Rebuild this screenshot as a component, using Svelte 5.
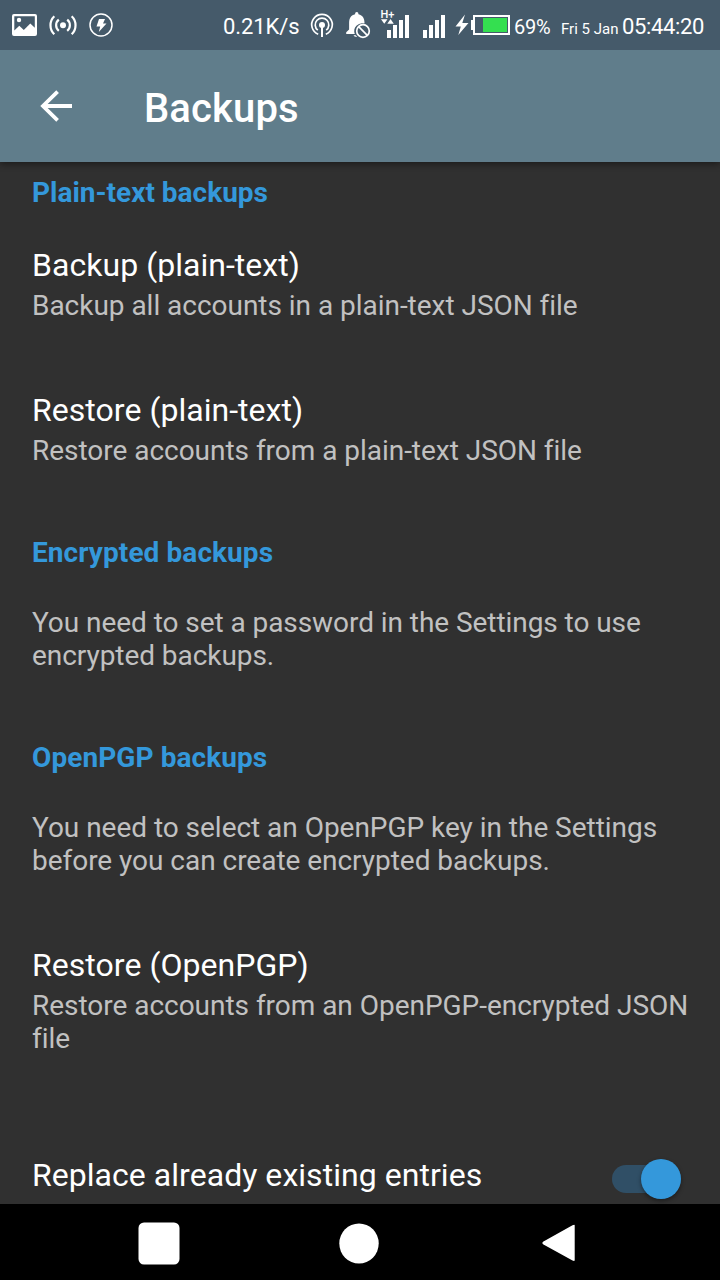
<script>
  const sections = [
    { heading: 'Plain-text backups', cls: 'plain', items: [
      { title: 'Backup (plain-text)', summary: ['Backup all accounts in a plain-text JSON file'] },
      { title: 'Restore (plain-text)', summary: ['Restore accounts from a plain-text JSON file'] }
    ] },
    { heading: 'Encrypted backups', cls: 'encrypted', items: [
      { summary: ['You need to set a password in the Settings to use', 'encrypted backups.'] }
    ] },
    { heading: 'OpenPGP backups', cls: 'pgp', items: [
      { summary: ['You need to select an OpenPGP key in the Settings', 'before you can create encrypted backups.'] },
      { title: 'Restore (OpenPGP)', summary: ['Restore accounts from an OpenPGP-encrypted JSON', 'file'] }
    ] }
  ];
  let replace = $state(true);
</script>

<div class="screen">
  <header class="status">
    <svg class="left-icons" width="122" height="50" viewBox="0 0 122 50" fill="#fff">
      <path fill-rule="evenodd" d="M14 14h21q2 0 2 2v18q0 2-2 2H14q-2 0-2-2V16q0-2 2-2zM14.300 16.300v14.200l5-4.800 4.500 4.300 6.500-6.600 4.500 4.300V16.300z" />
      <circle cx="19" cy="20" r="2.200" />
      <circle cx="63" cy="25.300" r="3" />
      <g fill="none" stroke="#fff" stroke-width="2.200">
        <path d="M58.800 19.700a7.200 7.200 0 0 0 0 11.200M67.200 19.700a7.200 7.200 0 0 1 0 11.200M54.300 16.300a12.500 12.500 0 0 0 0 18M71.700 16.300a12.500 12.500 0 0 1 0 18" />
        <circle cx="101" cy="25" r="11" stroke-width="1.500" />
      </g>
      <path d="M99 19h6l-2 4.500h3.500L98.800 32l1.400-5.500h-3.700z" />
    </svg>
    <span class="speed">0.21K/s</span>
    <svg class="mid-icons" width="215" height="50" viewBox="299 0 215 50" fill="#fff">
      <g fill="none" stroke="#fff" stroke-width="1.700">
        <path d="M318.200 34.200a10.300 10.300 0 1 1 7.600 0" />
        <path d="M317.800 30.200a6.800 6.800 0 1 1 8.400 0" />
        <path d="M322 26v11" stroke-width="2" />
      </g>
      <circle cx="322" cy="25" r="3" />
      <path d="M356.800 12q1.700 0 1.700 2.300c4.300 1 6 4.100 6 8.500v.7a8 8 0 0 0-9.700 10.500H346.200v-1.700l2.900-2.700v-7c0-4.400 2-7.500 6-8.300 0-1.600.5-2.300 1.700-2.300zM353.600 35.300h2.200l1.300 1.700c-2 0-3.200-.5-3.500-1.700z" />
      <circle cx="363" cy="31" r="6.300" fill="none" stroke="#fff" stroke-width="1.700" />
      <path d="m358.700 26.700 8.600 8.600" stroke="#fff" stroke-width="1.700" />
      <path d="M381 19.300h6.500l-3.250 4.500zM387.300 23.800h6.500l-3.250-4.700z" />
      <path d="M387 30h4v8h-4zM393 25h4v13h-4zM399 20h4v18h-4zM405 15h4v23h-4zM423 30h4v8h-4zM429 25h4v13h-4zM435 20h4v18h-4zM441 15h4v23h-4z" />
      <path d="m465 14.500-9.500 12h5.300l-2.500 8.500 10.200-12h-6.200z" />
      <path d="M471 20h3v10h-3z" />
      <rect x="474" y="16" width="35" height="18" fill="none" stroke="#fff" stroke-width="2" />
      <path d="M483 18h24v14h-24z" fill="#34df50" />
      <text x="380.500" y="17.900" font-family="Roboto, sans-serif" font-size="11" font-weight="500">H+</text>
    </svg>
    <span class="percent">69%</span>
    <span class="date">Fri 5 Jan</span>
    <span class="clock">05:44:20</span>
  </header>

  <div class="appbar">
    <svg width="34" height="34" viewBox="0 0 34 34" fill="none" stroke="#fff" stroke-width="3.800">
      <path d="M33 17H4M18.600 2.700 4 17l14.600 14.300" />
    </svg>
    <h1>Backups</h1>
  </div>

  <main>
    {#each sections as section}
      <section class={section.cls}>
        <h2>{section.heading}</h2>
        {#each section.items as item}
          <div class="item">
            {#if item.title}<h3>{item.title}</h3>{/if}
            <p>{#each item.summary as line}<span>{line}</span>{/each}</p>
          </div>
        {/each}
      </section>
    {/each}
    <div class="toggle-row">
      <h3>Replace already existing entries</h3>
      <button class="switch" class:on={replace} onclick={() => (replace = !replace)} aria-label="Replace already existing entries">
        <i></i>
      </button>
    </div>
  </main>

  <nav>
    <svg width="720" height="76" viewBox="0 1204 720 76" fill="#fff">
      <rect x="138.500" y="1222.500" width="41" height="42" rx="5.500" />
      <ellipse cx="359" cy="1243.500" rx="19.700" ry="20" />
      <path d="M543 1241.800 572.500 1225.200q2.200-1 2.200 0v35q0 1.200-2.200.4L543 1244.200q-1.500-1.200 0-2.400z" />
    </svg>
  </nav>
</div>

<style>
  :global(body) { margin: 0; background: #303030; }
  .screen {
    width: 720px;
    height: 1280px;
    display: flex;
    flex-direction: column;
    overflow: hidden;
    background: #303030;
    color: #fff;
    font-family: Roboto, sans-serif;
  }
  svg { display: block; flex: none; }
  h1, h2, h3, p { margin: 0; white-space: nowrap; }
  .status {
    height: 50px;
    flex: none;
    display: flex;
    align-items: baseline;
    background: #455a6a;
    white-space: nowrap;
    line-height: 52px;
    z-index: 2;
  }
  .status svg { align-self: flex-start; }
  .speed { width: 76px; margin-left: 101px; font-size: 22px; letter-spacing: -0.1px; }
  .percent { width: 47px; font-size: 20px; letter-spacing: -0.2px; }
  .date { width: 61px; font-size: 15px; }
  .clock { font-size: 22px; letter-spacing: -0.35px; }
  .status span { position: relative; top: 1px; }
  .appbar {
    height: 112px;
    flex: none;
    display: flex;
    align-items: center;
    box-sizing: border-box;
    padding-left: 39px;
    background: #607d8b;
    box-shadow: 0 2px 7px rgba(0, 0, 0, 0.45);
    z-index: 1;
  }
  h1 { margin: 6px 0 0 71px; font-size: 40px; font-weight: 500; line-height: 48px; letter-spacing: 0.12px; }
  main { flex: 1; min-height: 0; overflow: hidden; padding: 14px 32px 0; }
  h2 { color: #3498db; font-size: 28px; font-weight: 700; line-height: 33px; margin-bottom: 37px; }
  .encrypted h2, .pgp h2 { letter-spacing: 0.08px; }
  h3 { font-size: 32px; font-weight: 400; line-height: 38px; letter-spacing: 0.04px; }
  h3 + p { margin-top: 5px; }
  p { color: #c1c1c1; font-size: 28px; line-height: 33px; letter-spacing: -0.03px; }
  .encrypted p { letter-spacing: -0.06px; }
  p span { display: block; }
  .item { margin-bottom: 69px; }
  .toggle-row {
    display: flex;
    justify-content: space-between;
    align-items: flex-start;
    margin-top: 101px;
  }
  .switch {
    width: 69px;
    height: 28px;
    margin: 9px 7px 0 0;
    padding: 0;
    border: 0;
    border-radius: 14px;
    background: #555;
    display: flex;
    align-items: center;
  }
  .switch.on { background: #304f66; justify-content: flex-end; }
  .switch i {
    width: 40px;
    height: 40px;
    flex: none;
    border-radius: 50%;
    background: #3498db;
    box-shadow: 0 2px 4px rgba(0, 0, 0, 0.4);
  }
  nav { height: 76px; flex: none; background: #000; }
</style>
